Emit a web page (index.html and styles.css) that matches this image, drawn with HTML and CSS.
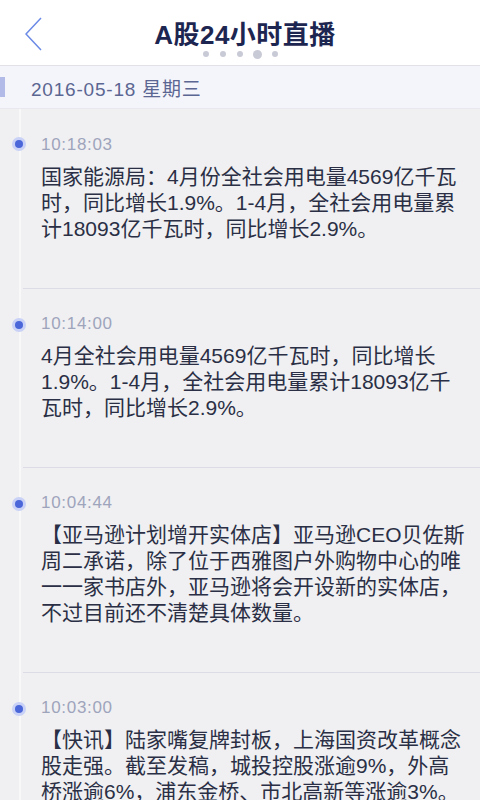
FILE: index.html
```html
<!DOCTYPE html>
<html lang="zh-CN">
<head>
<meta charset="UTF-8">
<meta name="viewport" content="width=device-width, initial-scale=1.0">
<title>A股24小时直播</title>
<link rel="stylesheet" href="styles.css">
</head>
<body>
<!-- Top bar -->
<div class="top-bar">
  <div class="back-btn">
    <svg width="18" height="34" viewBox="0 0 18 34"><polyline points="16,1 1,17 16,33" fill="none" stroke="#6b8ae6" stroke-width="1.5"/></svg>
  </div>
  <div class="title-box">
    <h1 class="title">A股24小时直播</h1>
    <div class="pager">
      <span class="dot"></span>
      <span class="dot"></span>
      <span class="dot"></span>
      <span class="dot active"></span>
      <span class="dot"></span>
    </div>
  </div>
  <div></div>
</div>
<!-- Date band -->
<div class="date-band">
  <span class="date-mark"></span>
  <span class="date-text">2016-05-18 星期三</span>
</div>
<!-- Timeline -->
<div class="timeline">
  <div class="item">
    <div class="time">10:18:03</div>
    <p class="text">国家能源局：4月份全社会用电量4569亿千瓦时，同比增长1.9%。1-4月，全社会用电量累计18093亿千瓦时，同比增长2.9%。</p>
  </div>
  <div class="item">
    <div class="time">10:14:00</div>
    <p class="text">4月全社会用电量4569亿千瓦时，同比增长1.9%。1-4月，全社会用电量累计18093亿千瓦时，同比增长2.9%。</p>
  </div>
  <div class="item">
    <div class="time">10:04:44</div>
    <p class="text">【亚马逊计划增开实体店】亚马逊CEO贝佐斯周二承诺，除了位于西雅图户外购物中心的唯一一家书店外，亚马逊将会开设新的实体店，不过目前还不清楚具体数量。</p>
  </div>
  <div class="item">
    <div class="time">10:03:00</div>
    <p class="text">【快讯】陆家嘴复牌封板，上海国资改革概念股走强。截至发稿，城投控股涨逾9%，外高桥涨逾6%，浦东金桥、市北高新等涨逾3%。</p>
  </div>
</div>
</body>
</html>
```

FILE: styles.css
```css
/* Base */
body {
  margin: 0;
  background-color: #f0f0f2;
  font-family: "Liberation Sans", "Noto Sans CJK SC", sans-serif;
  overflow: hidden;
}
/* Top bar */
.top-bar {
  display: grid;
  grid-template-columns: 60px 1fr 60px;
  height: 65px;
  background-color: #fff;
  border-bottom: 1px solid #e2e2e6;
}
.back-btn {
  padding: 17px 0 0 25px;
}
.title-box {
  display: flex;
  flex-direction: column;
  align-items: center;
  padding: 20px 0 0 10px;
}
.title {
  margin: 0;
  font-size: 26px;
  line-height: 30px;
  font-weight: bold;
  color: #1d2650;
  letter-spacing: 0.5px;
}
.pager {
  display: flex;
  align-items: center;
  gap: 11px;
  height: 8px;
  margin: 0 10px 0 0;
}
.dot {
  width: 6px;
  height: 6px;
  border-radius: 50%;
  background-color: #c8cad6;
}
.dot.active {
  width: 9px;
  height: 9px;
  margin: 0 -1px;
}
/* Date band */
.date-band {
  display: flex;
  align-items: center;
  height: 42px;
  background-color: #f4f5fa;
  border-bottom: 1px solid #e8e8ee;
}
.date-mark {
  width: 5px;
  height: 20px;
  background-color: #b2bbe8;
}
.date-text {
  margin-left: 26px;
  font-size: 19px;
  color: #5b6692;
  letter-spacing: 0.8px;
}
/* Timeline */
.timeline {
  margin-left: 19px;
  border-left: 2px solid #f8f8f8;
}
.item {
  position: relative;
  margin-left: 2px;
  padding: 25px 14px 46px 18px;
  border-top: 1px solid #dcdce6;
}
.item:first-child {
  border-top: none;
  padding-top: 26px;
}
.item::before {
  content: "";
  position: absolute;
  left: -8px;
  top: 32px;
  width: 8px;
  height: 8px;
  border-radius: 50%;
  background-color: #4a66d8;
  box-shadow: 0 0 0 3px #c9d2f6;
}
.item:first-child::before {
  top: 31px;
}
.time {
  font-size: 17px;
  line-height: 20px;
  color: #9ea4bc;
  letter-spacing: 0.7px;
}
.text {
  margin: 9px 0 0;
  font-size: 21px;
  line-height: 26px;
  color: #2a2f45;
}
```
